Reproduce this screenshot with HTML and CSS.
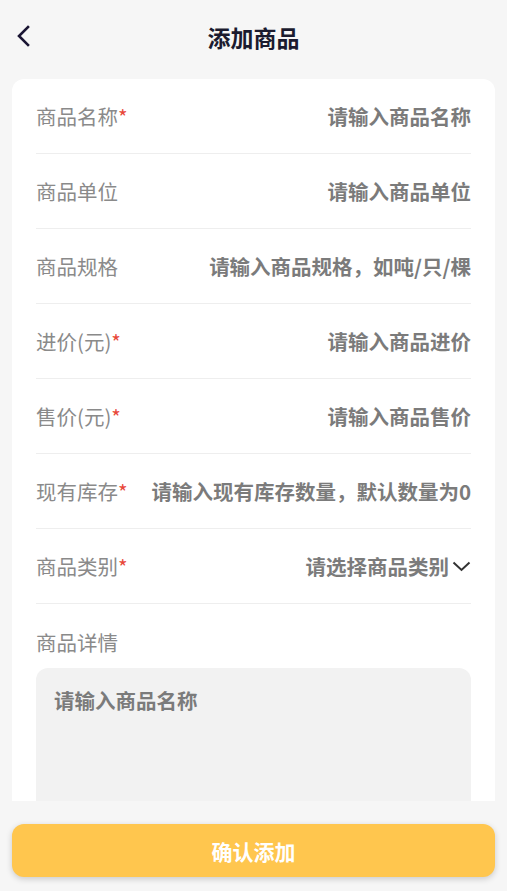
FILE: index.html
```html
<!DOCTYPE html>
<html lang="zh-CN">
<head>
  <meta charset="UTF-8">
  <meta name="viewport" content="width=device-width, initial-scale=1">
  <title>添加商品</title>
  <link rel="stylesheet" href="styles.css">
</head>
<body>
  <div class="page">
    <header class="nav">
      <button class="back-btn" type="button" aria-label="返回">
        <svg width="14" height="22" viewBox="0 0 14 22">
          <path d="M12 2 L3 11 L12 20" fill="none" stroke="#1a1533" stroke-width="2.6" stroke-linecap="square"/>
        </svg>
      </button>
      <h1 class="nav-title">添加商品</h1>
    </header>

    <main class="main">
      <form class="card" id="goodsForm">
        <div class="row">
          <label for="name">商品名称<span class="star">*</span></label>
          <input type="text" id="name" placeholder="请输入商品名称">
        </div>
        <div class="row">
          <label for="unit">商品单位</label>
          <input type="text" id="unit" placeholder="请输入商品单位">
        </div>
        <div class="row">
          <label for="spec">商品规格</label>
          <input type="text" id="spec" placeholder="请输入商品规格，如吨/只/棵">
        </div>
        <div class="row">
          <label for="cost">进价(元)<span class="star">*</span></label>
          <input type="text" inputmode="decimal" id="cost" placeholder="请输入商品进价">
        </div>
        <div class="row">
          <label for="price">售价(元)<span class="star">*</span></label>
          <input type="text" inputmode="decimal" id="price" placeholder="请输入商品售价">
        </div>
        <div class="row">
          <label for="stock">现有库存<span class="star">*</span></label>
          <input type="text" inputmode="numeric" id="stock" placeholder="请输入现有库存数量，默认数量为0">
        </div>
        <div class="row">
          <label>商品类别<span class="star">*</span></label>
          <div class="picker">
            <span>请选择商品类别</span>
            <svg width="19" height="11" viewBox="0 0 19 11">
              <path d="M1.5 1.5 L9.5 9 L17.5 1.5" fill="none" stroke="#333" stroke-width="2"/>
            </svg>
          </div>
        </div>
        <div class="detail">
          <label for="detail">商品详情</label>
          <textarea id="detail" placeholder="请输入商品名称"></textarea>
        </div>
      </form>
    </main>

    <footer class="footer">
      <button class="submit-btn" type="submit" form="goodsForm">确认添加</button>
    </footer>
  </div>
</body>
</html>
```

FILE: styles.css
```css
* {
  box-sizing: border-box;
}
body {
  margin: 0;
  background: #f6f6f6;
  font-family: "Noto Sans CJK SC", "Noto Sans", sans-serif;
}
.page {
  height: 100vh;
  display: flex;
  flex-direction: column;
}
.nav {
  height: 74px;
  flex-shrink: 0;
  display: flex;
  align-items: center;
  justify-content: center;
  position: relative;
}
.back-btn {
  position: absolute;
  left: 16px;
  top: 25px;
  padding: 0;
  border: none;
  background: none;
  cursor: pointer;
}
.back-btn svg {
  display: block;
}
.nav-title {
  margin: 0;
  font-size: 23px;
  font-weight: bold;
  color: #1b1b2f;
}
.main {
  flex: 1;
  min-height: 0;
  overflow: hidden;
  padding: 5px 12px 0;
}
.card {
  background: #fff;
  border-radius: 12px;
  padding: 0 24px 24px;
}
.row {
  height: 75px;
  display: flex;
  align-items: center;
  justify-content: space-between;
  border-bottom: 1px solid #eeeeee;
}
.row label,
.detail label {
  flex-shrink: 0;
  font-size: 20.5px;
  color: #8a8a8a;
  white-space: nowrap;
}
.star {
  color: #e8483a;
}
.row input {
  flex: 1;
  min-width: 0;
  margin-left: 10px;
  padding: 0;
  border: none;
  outline: none;
  background: none;
  text-align: right;
  font-family: inherit;
  font-size: 20.5px;
  font-weight: bold;
  color: #333;
}
.row input::placeholder,
.detail textarea::placeholder {
  color: #7b7b7b;
}
.picker {
  display: flex;
  align-items: center;
  gap: 3px;
  font-size: 20.5px;
  font-weight: bold;
  color: #7b7b7b;
}
.picker svg {
  display: block;
}
.detail {
  padding-top: 24px;
}
.detail label {
  display: block;
  line-height: 28px;
}
.detail textarea {
  display: block;
  width: 100%;
  height: 200px;
  margin-top: 12px;
  padding: 18px;
  border: none;
  border-radius: 12px;
  outline: none;
  resize: none;
  background: #f2f2f2;
  font-family: inherit;
  font-size: 20.5px;
  font-weight: bold;
  line-height: 28px;
  color: #333;
}
.footer {
  flex-shrink: 0;
  height: 90px;
  padding: 23px 12px 0;
}
.submit-btn {
  width: 100%;
  height: 53px;
  border: none;
  border-radius: 12px;
  background: #ffc64e;
  box-shadow: 0 2px 6px rgba(0,0,0,0.18);
  color: #fff;
  font-family: inherit;
  font-size: 21px;
  font-weight: bold;
  cursor: pointer;
}
```
